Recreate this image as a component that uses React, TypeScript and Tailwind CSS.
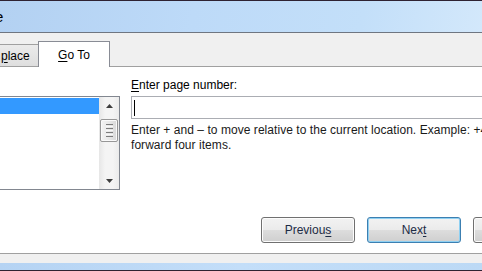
export default function App() {
  return (
    <div className="w-[482px] h-[271px] overflow-hidden flex flex-col bg-white text-black font-['Liberation_Sans',Arial,sans-serif]">
      <div className="h-px bg-[#2e2232]" />
      <div className="h-[31px] flex items-center bg-[linear-gradient(100deg,#b3d1f2_0%,#bddaf8_40%,#c3dff9_75%,#d3e8fb_100%)]">
        <span className="-ml-[5px] text-[15px] leading-none text-black">e</span>
      </div>
      <div className="h-px bg-[#6f7681]" />
      <div className="h-[34px] bg-[#f0f0f0] border-b border-[#a0a0a0] flex items-end">
        <div className="w-[38px] h-[22px] border-t border-[#a0a0a0] bg-[linear-gradient(to_bottom,#ebebeb,#dedede)] flex items-center text-[12px] leading-none whitespace-nowrap">
          <span className="pl-[1px]"><span className="underline underline-offset-2">p</span>lace</span>
        </div>
        <div className="relative w-[72px] h-[26px] -mb-px border border-b-0 border-[#898c95] bg-white flex items-center justify-center text-[12px] leading-none">
          <span><span className="underline underline-offset-2">G</span>o To</span>
        </div>
      </div>
      <div className="flex-1 flex flex-col">
        <div className="flex">
          <div className="mt-[29px] w-[120px] h-[94px] shrink-0 border-y border-r border-[#828790] flex bg-white">
            <div className="flex-1">
              <div className="mt-[1px] h-[16px] bg-[#3399ff]" />
            </div>
            <div className="w-[20px] flex flex-col items-center bg-[linear-gradient(to_right,#e6e6e6,#f4f4f4_30%,#f4f4f4_70%,#ebebeb)]">
              <div className="h-[17px] w-full flex items-center justify-center">
                <svg width="7" height="4" viewBox="0 0 7 4"><path d="M0 4 L3.5 0 L7 4Z" fill="#3e3e3e" /></svg>
              </div>
              <div className="mt-[5px] w-[18px] h-[23px] rounded-[2px] border border-[#979797] bg-[linear-gradient(to_right,#f3f3f3,#e8e8e8_50%,#d8d8d8)] flex flex-col items-center justify-center gap-[1px] shadow-[inset_0_0_0_1px_#fafafa]">
                <div className="w-[7px] h-px bg-[#7d7d7d]" />
                <div className="w-[7px] h-px bg-[#f8f8f8]" />
                <div className="w-[7px] h-px bg-[#7d7d7d]" />
                <div className="w-[7px] h-px bg-[#f8f8f8]" />
                <div className="w-[7px] h-px bg-[#7d7d7d]" />
                <div className="w-[7px] h-px bg-[#f8f8f8]" />
                <div className="w-[7px] h-px bg-[#7d7d7d]" />
              </div>
              <div className="mt-auto h-[17px] w-full flex items-center justify-center">
                <svg width="7" height="4" viewBox="0 0 7 4"><path d="M0 0 L7 0 L3.5 4Z" fill="#3e3e3e" /></svg>
              </div>
            </div>
          </div>
          <div className="ml-[11px] pt-[11px] flex flex-col">
            <div className="text-[12px] leading-[15px] whitespace-nowrap">
              <span className="underline underline-offset-2">E</span>nter page number:
            </div>
            <div className="mt-[3px] w-[380px] h-[23px] border border-[#abadb3] bg-white flex items-center pl-[2px]">
              <div className="w-px h-[16px] bg-black" />
            </div>
            <div className="mt-[4px] text-[12px] leading-[15px] tracking-[0.05px] whitespace-nowrap text-[#1a1a1a]">
              Enter + and – to move relative to the current location. Example: +4 will move
              <br />
              forward four items.
            </div>
          </div>
        </div>
        <div className="mt-auto mb-[10px] pl-[261px] flex gap-[12px]">
          <button className="w-[94px] h-[26px] shrink-0 rounded-[3px] border border-[#707070] bg-[linear-gradient(to_bottom,#f2f2f2_0%,#ebebeb_49%,#dddddd_50%,#cfcfcf_100%)] shadow-[inset_0_0_0_1px_#fcfcfc] text-[12px] leading-none text-[#1c2b45]">
            Previou<span className="underline underline-offset-2">s</span>
          </button>
          <button className="w-[94px] h-[26px] shrink-0 rounded-[3px] border border-[#3c7fb1] bg-[linear-gradient(to_bottom,#f2f2f2_0%,#ebebeb_49%,#dddddd_50%,#cfcfcf_100%)] shadow-[inset_0_0_0_1px_#8fd0f2] text-[12px] leading-none text-[#1c2b45]">
            Nex<span className="underline underline-offset-2">t</span>
          </button>
          <button className="w-[94px] h-[26px] shrink-0 rounded-[3px] border border-[#707070] bg-[linear-gradient(to_bottom,#f2f2f2_0%,#ebebeb_49%,#dddddd_50%,#cfcfcf_100%)] shadow-[inset_0_0_0_1px_#fcfcfc] text-[12px] leading-none text-[#1c2b45]">
            Close
          </button>
        </div>
      </div>
      <div className="h-px bg-[#a0a0a0]" />
      <div className="h-[9px] bg-[#f0f0f0]" />
      <div className="h-[7px] bg-[linear-gradient(to_right,#b5d3f3,#c3def9_50%,#bcd9f5)]" />
      <div className="h-px bg-[#2e2232]" />
    </div>
  );
}
